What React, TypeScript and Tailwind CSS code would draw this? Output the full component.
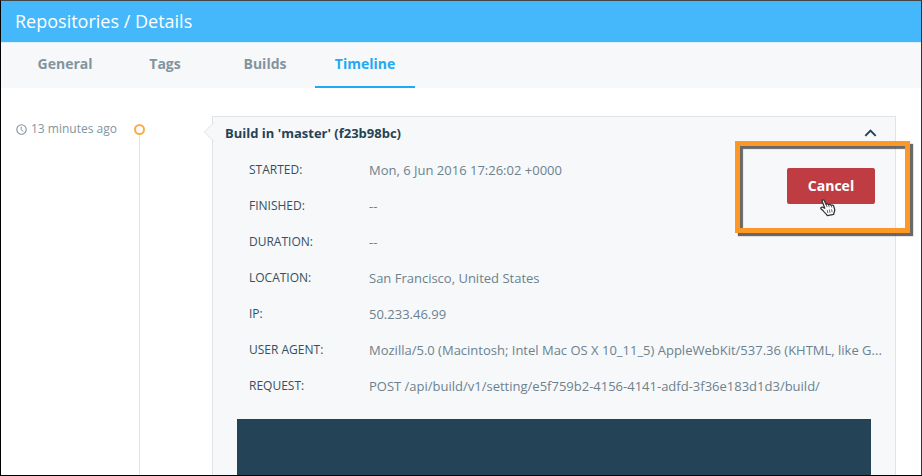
const tabs = ['General', 'Tags', 'Builds', 'Timeline'];

const details = [
  ['STARTED:', 'Mon, 6 Jun 2016 17:26:02 +0000'],
  ['FINISHED:', '--'],
  ['DURATION:', '--'],
  ['LOCATION:', 'San Francisco, United States'],
  ['IP:', '50.233.46.99'],
  ['USER AGENT:', 'Mozilla/5.0 (Macintosh; Intel Mac OS X 10_11_5) AppleWebKit/537.36 (KHTML, like G...'],
  ['REQUEST:', 'POST /api/build/v1/setting/e5f759b2-4156-4141-adfd-3f36e183d1d3/build/'],
];

function ClockIcon() {
  return (
    <svg className="h-[11px] w-[11px]" viewBox="0 0 11 11" fill="none" stroke="currentColor">
      <circle cx="5.5" cy="5.5" r="4.7" strokeWidth="1.1" />
      <path d="M5.2 2.7v3l2.2 1.6" strokeWidth="1" />
    </svg>
  );
}

function HandCursor() {
  return (
    <svg className="absolute left-[33px] top-[31px] h-[18px] w-[16px]" viewBox="0 0 16 18">
      <path
        d="M2.2 2.4C1.7.8 3.7.2 4.3 1.6L6.1 5.5C6.4 4.5 8.2 4.7 8.5 5.8C9.1 4.9 10.8 5.3 11.1 6.4C11.8 5.7 13.4 6.2 13.8 7.4L14.7 10.6C15 12.4 13.7 13.3 13.7 15.3L7.2 16.6C6.6 14.7 4.4 13.9 3 11.5L1.1 9.9C.2 8.8 1.7 7.6 3 8.3L4.8 9.2Z"
        fill="white"
        stroke="#333"
        strokeWidth="1.3"
        strokeLinejoin="round"
      />
      <path d="M6.2 5.6l.9 2.6M8.6 5.9l.7 2.3M11.2 6.5l.6 2.1M7.1 10.8l.8 3.3M9.4 10.5l.6 3.3M11.6 10.2l.5 3.1" fill="none" stroke="#444" strokeWidth=".8" />
    </svg>
  );
}

export default function App() {
  return (
    <div className="relative flex h-[476px] w-[922px] flex-col overflow-hidden border border-black border-t-[#444] border-r-[#333] bg-white font-['Open_Sans',sans-serif]">
      <header className="flex h-[41px] shrink-0 items-center bg-[#44b8fa] pl-[14px] text-[18px] text-white">
        <h1 className="whitespace-nowrap">Repositories / Details</h1>
      </header>
      <nav className="flex h-[46px] shrink-0 border-t border-[#dceffb] bg-[#f7f8fa] pl-[14px]">
        {tabs.map((tab) => (
          <a
            key={tab}
            className={
              tab === 'Timeline'
                ? 'flex w-[100px] justify-center border-b-2 border-[#22a9f3] pt-[10px] text-[14px] leading-[22px] font-bold text-[#22a9f3]'
                : 'flex w-[100px] justify-center pt-[10px] text-[14px] leading-[22px] font-bold text-[#82949e]'
            }
          >
            {tab}
          </a>
        ))}
      </nav>
      <main className="flex flex-1 pt-[28px]">
        <div className="flex h-[26px] w-[132px] shrink-0 items-center gap-[4px] pl-[15px] text-[12px] text-[#8295a0]">
          <ClockIcon />
          <span className="whitespace-nowrap">13 minutes ago</span>
        </div>
        <div className="flex w-[13px] shrink-0 flex-col items-center pt-[8px]">
          <div className="h-[11px] w-[11px] shrink-0 rounded-full border-2 border-[#ffab45]" />
          <div className="w-px flex-1 bg-[#e3e6e8]" />
        </div>
        <section className="relative ml-[66px] flex w-[684px] flex-col border border-b-0 border-[#dfe4e8] bg-[#f7f8fa]">
          <svg className="absolute top-[5px] left-[-10px] h-[20px] w-[11px]" viewBox="0 0 11 20">
            <path d="M11 .5L1.3 10L11 19.5" fill="#f7f8fa" stroke="#dfe4e8" />
          </svg>
          <div className="flex h-[35px] shrink-0 justify-between pt-[7px] pl-[12px] pr-[18px]">
            <h2 className="text-[13px] leading-[18px] font-bold text-[#254356]">Build in 'master' (f23b98bc)</h2>
            <svg className="mt-[4px] h-[9px] w-[13px]" viewBox="0 0 13 9" fill="none" stroke="#254356" strokeWidth="2">
              <path d="M1.3 7.9L6.5 2.6L11.7 7.9" />
            </svg>
          </div>
          <dl className="flex shrink-0 flex-col pl-[36px] pr-[12px]">
            {details.map(([label, value]) => (
              <div key={label} className="flex h-[36px] items-center">
                <dt className="w-[120px] shrink-0 text-[12px] text-[#33505f]">{label}</dt>
                <dd className="pt-px text-[13px] whitespace-nowrap text-[#6b828e]">{value}</dd>
              </div>
            ))}
          </dl>
          <div className="mt-[15px] mr-[24px] ml-[24px] flex-1 bg-[#254356]" />
        </section>
      </main>
      <div className="absolute top-[140px] left-[734px] h-[92px] w-[175px] border-[5px] border-[#fd9827] shadow-[3px_3px_1px_#444c,inset_3px_3px_1px_#444c]">
        <button className="relative mt-[22px] ml-[47px] block h-[36px] w-[88px] rounded-[2px] bg-[#bf3c43] text-[14px] leading-[36px] font-bold text-white">
          Cancel
          <HandCursor />
        </button>
      </div>
    </div>
  );
}
